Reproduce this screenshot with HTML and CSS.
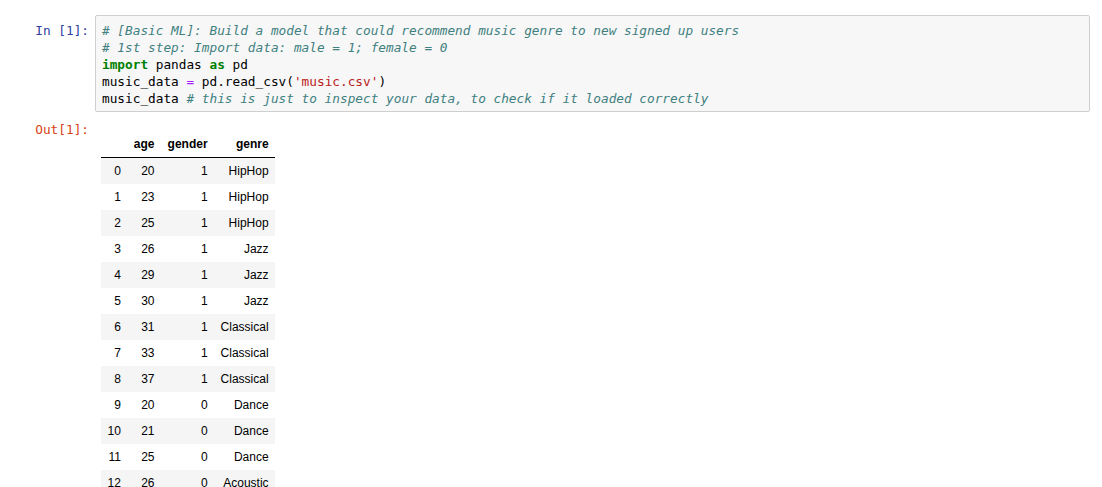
FILE: index.html
```html
<!DOCTYPE html>
<html>
<head>
<meta charset="utf-8">
<link rel="stylesheet" href="styles.css">
</head>
<body>
<div class="cell">
  <div class="row input-row">
    <div class="prompt in-prompt">In&nbsp;[1]:</div>
    <div class="code-box">
<pre class="code"><span class="c"># [Basic ML]: Build a model that could recommend music genre to new signed up users</span>
<span class="c"># 1st step: Import data: male = 1; female = 0</span>
<span class="k">import</span> pandas <span class="k">as</span> pd
music_data <span class="o">=</span> pd.read_csv(<span class="s">'music.csv'</span>)
music_data <span class="c"># this is just to inspect your data, to check if it loaded correctly</span></pre>
    </div>
  </div>
  <div class="row output-row">
    <div class="prompt out-prompt">Out[1]:</div>
    <div class="output">
      <table class="df">
        <thead>
          <tr><th></th><th>age</th><th>gender</th><th>genre</th></tr>
        </thead>
        <tbody>
          <tr><th>0</th><td>20</td><td>1</td><td>HipHop</td></tr>
          <tr><th>1</th><td>23</td><td>1</td><td>HipHop</td></tr>
          <tr><th>2</th><td>25</td><td>1</td><td>HipHop</td></tr>
          <tr><th>3</th><td>26</td><td>1</td><td>Jazz</td></tr>
          <tr><th>4</th><td>29</td><td>1</td><td>Jazz</td></tr>
          <tr><th>5</th><td>30</td><td>1</td><td>Jazz</td></tr>
          <tr><th>6</th><td>31</td><td>1</td><td>Classical</td></tr>
          <tr><th>7</th><td>33</td><td>1</td><td>Classical</td></tr>
          <tr><th>8</th><td>37</td><td>1</td><td>Classical</td></tr>
          <tr><th>9</th><td>20</td><td>0</td><td>Dance</td></tr>
          <tr><th>10</th><td>21</td><td>0</td><td>Dance</td></tr>
          <tr><th>11</th><td>25</td><td>0</td><td>Dance</td></tr>
          <tr><th>12</th><td>26</td><td>0</td><td>Acoustic</td></tr>
        </tbody>
      </table>
    </div>
  </div>
</div>
</body>
</html>
```

FILE: styles.css
```css
html, body {
  margin: 0;
  padding: 0;
  background: #fff;
}
body {
  overflow: hidden;
}
.cell {
  padding: 15px 12px 0 0;
}
.row {
  display: flex;
  align-items: flex-start;
}
.prompt {
  width: 89px;
  flex: none;
  text-align: right;
  padding-right: 6px;
  font-family: "DejaVu Sans Mono", monospace;
  font-size: 12.75px;
  line-height: 17px;
  white-space: nowrap;
}
.in-prompt {
  color: #303f9f;
  padding-top: 7px;
}
.out-prompt {
  color: #d84315;
  padding-top: 9px;
}
.code-box {
  flex: 1;
  background: #f7f7f7;
  border: 1px solid #cfcfcf;
  border-radius: 2px;
  padding: 6px 6px 4px 6px;
}
.code {
  margin: 0;
  font-family: "DejaVu Sans Mono", monospace;
  font-size: 12.75px;
  line-height: 17px;
  color: #000;
  white-space: pre;
}
.c { color: #408080; font-style: italic; }
.k { color: #008000; font-weight: bold; }
.s { color: #ba2121; }
.o { color: #aa22ff; }
.output {
  padding: 19px 0 0 6px;
}
.df {
  border-collapse: collapse;
  border-spacing: 0;
  font-family: "Liberation Sans", Arial, sans-serif;
  font-size: 12px;
  line-height: 14px;
  color: #000;
}
.df th, .df td {
  padding: 6px 6.5px;
  text-align: right;
  vertical-align: middle;
  white-space: nowrap;
}
.df thead th {
  font-weight: bold;
  border-bottom: 1px solid #000;
  padding-bottom: 6px;
}
.df tbody th {
  font-weight: normal;
}
.df tbody tr:nth-child(odd) {
  background: #f5f5f5;
}
```
